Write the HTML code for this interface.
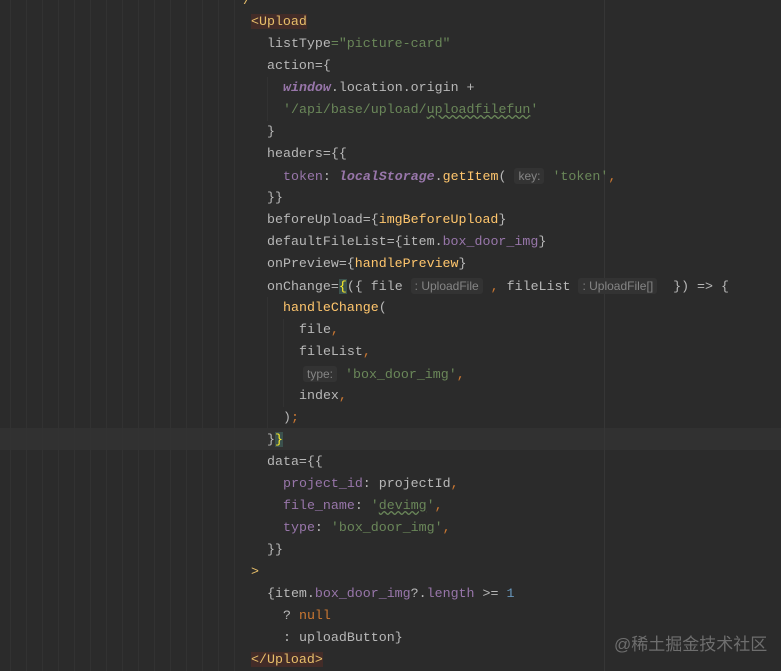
<!DOCTYPE html>
<html><head><meta charset="utf-8"><style>
body{margin:0;width:781px;height:671px;background:#2b2b2b;overflow:hidden;position:relative;font-family:"Liberation Mono",monospace;font-size:13.3px;color:#b8b8b8}
.g{position:absolute;top:0;width:1px;height:671px;background:#323232}
.l{position:absolute;left:0;height:22px;line-height:22px;white-space:pre}
.s{color:#6a8759}.t{color:#e8bf6a}.f{color:#ffc66d}.p{color:#9876aa}.i{font-style:italic;font-weight:bold}.o{color:#cc7832}.n{color:#6897bb}
.h{font-family:"Liberation Sans",sans-serif;font-size:12px;color:#858585;background:#333333;border-radius:3px;padding:1px 4px}
.tb{background:#432c28}
.u{text-decoration:underline wavy #6a8759}
</style></head><body>
<div style="position:absolute;left:0;top:428px;width:781px;height:22px;background:#313131"></div>
<div class="g" style="left:10px"></div><div class="g" style="left:26px"></div><div class="g" style="left:42px"></div><div class="g" style="left:58px"></div><div class="g" style="left:74px"></div><div class="g" style="left:90px"></div><div class="g" style="left:106px"></div><div class="g" style="left:122px"></div><div class="g" style="left:138px"></div><div class="g" style="left:154px"></div><div class="g" style="left:170px"></div><div class="g" style="left:186px"></div><div class="g" style="left:202px"></div><div class="g" style="left:218px"></div><div class="g" style="left:234px"></div>
<div class="g" style="left:604px;background:#363636"></div>
<div class="g" style="left:267px;top:77px;height:44px"></div>
<div class="g" style="left:267px;top:297px;height:132px"></div>
<div class="g" style="left:283px;top:319px;height:88px"></div>
<div class="l" style="top:-10px;left:243px"><span class="t">/</span></div>
<div class="l" style="top:11px;left:251px"><span class="t tb">&lt;Upload</span></div>
<div class="l" style="top:33px;left:267px">listType<span class="s">="picture-card"</span></div>
<div class="l" style="top:55px;left:267px">action={</div>
<div class="l" style="top:77px;left:283px"><span class="p i">window</span>.location.origin +</div>
<div class="l" style="top:99px;left:283px"><span class="s">'/api/base/upload/<span class="u">uploadfilefun</span>'</span></div>
<div class="l" style="top:121px;left:267px">}</div>
<div class="l" style="top:143px;left:267px">headers={{</div>
<div class="l" style="top:165px;left:283px"><span class="p">token</span>: <span class="p i">localStorage</span>.<span class="f">getItem</span>( <span class="h">key:</span> <span class="s">'token'</span><span class="o">,</span></div>
<div class="l" style="top:187px;left:267px">}}</div>
<div class="l" style="top:209px;left:267px">beforeUpload={<span class="f">imgBeforeUpload</span>}</div>
<div class="l" style="top:231px;left:267px">defaultFileList={item.<span class="p">box_door_img</span>}</div>
<div class="l" style="top:253px;left:267px">onPreview={<span class="f">handlePreview</span>}</div>
<div class="l" style="top:275px;left:267px">onChange=<span style="color:#ffef28;background:#3b514d">{</span>({ file <span class="h">: UploadFile</span> <span class="o">,</span> fileList <span class="h">: UploadFile[]</span>  }) =&gt; {</div>
<div class="l" style="top:297px;left:283px"><span class="f">handleChange</span>(</div>
<div class="l" style="top:319px;left:299px">file<span class="o">,</span></div>
<div class="l" style="top:341px;left:299px">fileList<span class="o">,</span></div>
<div class="l" style="top:363px;left:303px"><span class="h">type:</span> <span class="s">'box_door_img'</span><span class="o">,</span></div>
<div class="l" style="top:385px;left:299px">index<span class="o">,</span></div>
<div class="l" style="top:407px;left:283px">)<span class="o">;</span></div>
<div class="l" style="top:429px;left:267px">}<span style="color:#ffef28;background:#3b514d">}</span></div>
<div class="l" style="top:451px;left:267px">data={{</div>
<div class="l" style="top:473px;left:283px"><span class="p">project_id</span>: projectId<span class="o">,</span></div>
<div class="l" style="top:495px;left:283px"><span class="p">file_name</span>: <span class="s">'<span class="u">devimg</span>'</span><span class="o">,</span></div>
<div class="l" style="top:517px;left:283px"><span class="p">type</span>: <span class="s">'box_door_img'</span><span class="o">,</span></div>
<div class="l" style="top:539px;left:267px">}}</div>
<div class="l" style="top:561px;left:251px"><span class="t">&gt;</span></div>
<div class="l" style="top:583px;left:267px">{item.<span class="p">box_door_img</span>?.<span class="p">length</span> &gt;= <span class="n">1</span></div>
<div class="l" style="top:605px;left:283px">? <span class="o">null</span></div>
<div class="l" style="top:627px;left:283px">: uploadButton}</div>
<div class="l" style="top:649px;left:251px"><span class="t tb">&lt;/Upload&gt;</span></div>
<div style="position:absolute;left:614px;top:630px;font-family:'Liberation Sans','Noto Sans CJK SC',sans-serif;font-size:17px;color:#6e6e6e">@稀土掘金技术社区</div>
</body></html>
